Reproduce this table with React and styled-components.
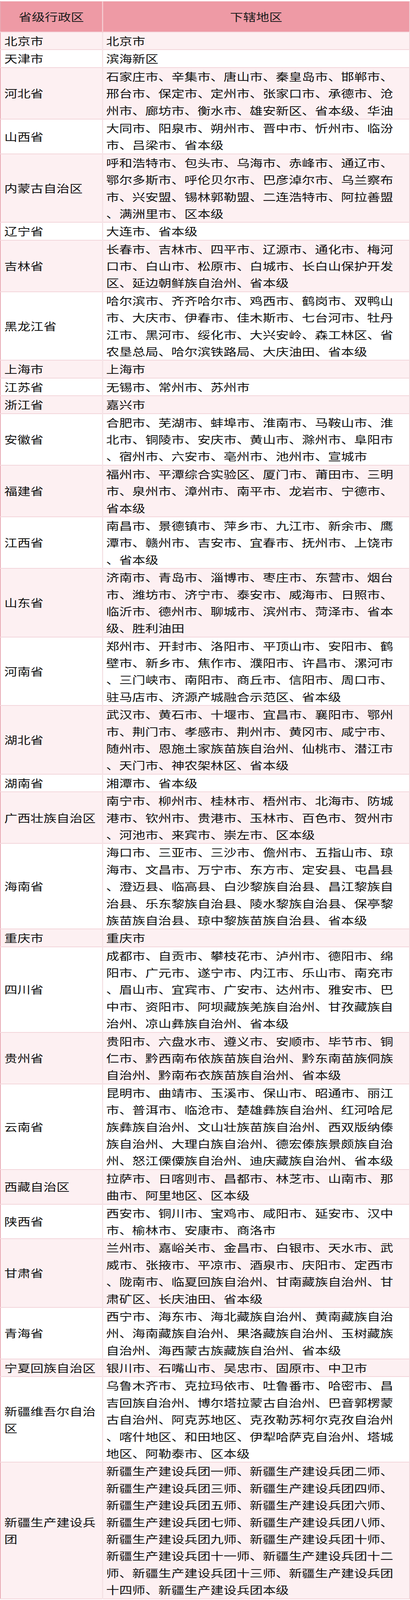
import styled, { createGlobalStyle } from 'styled-components';

const GlobalStyle = createGlobalStyle`
  body {
    margin: 0;
    background: #ffffff;
  }
`;

const rows = [
  ['北京市', '北京市'],
  ['天津市', '滨海新区'],
  ['河北省', '石家庄市、辛集市、唐山市、秦皇岛市、邯郸市、邢台市、保定市、定州市、张家口市、承德市、沧州市、廊坊市、衡水市、雄安新区、省本级、华油'],
  ['山西省', '大同市、阳泉市、朔州市、晋中市、忻州市、临汾市、吕梁市、省本级'],
  ['内蒙古自治区', '呼和浩特市、包头市、乌海市、赤峰市、通辽市、鄂尔多斯市、呼伦贝尔市、巴彦淖尔市、乌兰察布市、兴安盟、锡林郭勒盟、二连浩特市、阿拉善盟、满洲里市、区本级'],
  ['辽宁省', '大连市、省本级'],
  ['吉林省', '长春市、吉林市、四平市、辽源市、通化市、梅河口市、白山市、松原市、白城市、长白山保护开发区、延边朝鲜族自治州、省本级'],
  ['黑龙江省', '哈尔滨市、齐齐哈尔市、鸡西市、鹤岗市、双鸭山市、大庆市、伊春市、佳木斯市、七台河市、牡丹江市、黑河市、绥化市、大兴安岭、森工林区、省农垦总局、哈尔滨铁路局、大庆油田、省本级'],
  ['上海市', '上海市'],
  ['江苏省', '无锡市、常州市、苏州市'],
  ['浙江省', '嘉兴市'],
  ['安徽省', '合肥市、芜湖市、蚌埠市、淮南市、马鞍山市、淮北市、铜陵市、安庆市、黄山市、滁州市、阜阳市、宿州市、六安市、亳州市、池州市、宣城市'],
  ['福建省', '福州市、平潭综合实验区、厦门市、莆田市、三明市、泉州市、漳州市、南平市、龙岩市、宁德市、省本级'],
  ['江西省', '南昌市、景德镇市、萍乡市、九江市、新余市、鹰潭市、赣州市、吉安市、宜春市、抚州市、上饶市、省本级'],
  ['山东省', '济南市、青岛市、淄博市、枣庄市、东营市、烟台市、潍坊市、济宁市、泰安市、威海市、日照市、临沂市、德州市、聊城市、滨州市、菏泽市、省本级、胜利油田'],
  ['河南省', '郑州市、开封市、洛阳市、平顶山市、安阳市、鹤壁市、新乡市、焦作市、濮阳市、许昌市、漯河市、三门峡市、南阳市、商丘市、信阳市、周口市、驻马店市、济源产城融合示范区、省本级'],
  ['湖北省', '武汉市、黄石市、十堰市、宜昌市、襄阳市、鄂州市、荆门市、孝感市、荆州市、黄冈市、咸宁市、随州市、恩施土家族苗族自治州、仙桃市、潜江市、天门市、神农架林区、省本级'],
  ['湖南省', '湘潭市、省本级'],
  ['广西壮族自治区', '南宁市、柳州市、桂林市、梧州市、北海市、防城港市、钦州市、贵港市、玉林市、百色市、贺州市、河池市、来宾市、崇左市、区本级'],
  ['海南省', '海口市、三亚市、三沙市、儋州市、五指山市、琼海市、文昌市、万宁市、东方市、定安县、屯昌县、澄迈县、临高县、白沙黎族自治县、昌江黎族自治县、乐东黎族自治县、陵水黎族自治县、保亭黎族苗族自治县、琼中黎族苗族自治县、省本级'],
  ['重庆市', '重庆市'],
  ['四川省', '成都市、自贡市、攀枝花市、泸州市、德阳市、绵阳市、广元市、遂宁市、内江市、乐山市、南充市、眉山市、宜宾市、广安市、达州市、雅安市、巴中市、资阳市、阿坝藏族羌族自治州、甘孜藏族自治州、凉山彝族自治州、省本级'],
  ['贵州省', '贵阳市、六盘水市、遵义市、安顺市、毕节市、铜仁市、黔西南布依族苗族自治州、黔东南苗族侗族自治州、黔南布衣族苗族自治州、省本级'],
  ['云南省', '昆明市、曲靖市、玉溪市、保山市、昭通市、丽江市、普洱市、临沧市、楚雄彝族自治州、红河哈尼族彝族自治州、文山壮族苗族自治州、西双版纳傣族自治州、大理白族自治州、德宏傣族景颇族自治州、怒江傈僳族自治州、迪庆藏族自治州、省本级'],
  ['西藏自治区', '拉萨市、日喀则市、昌都市、林芝市、山南市、那曲市、阿里地区、区本级'],
  ['陕西省', '西安市、铜川市、宝鸡市、咸阳市、延安市、汉中市、榆林市、安康市、商洛市'],
  ['甘肃省', '兰州市、嘉峪关市、金昌市、白银市、天水市、武威市、张掖市、平凉市、酒泉市、庆阳市、定西市、陇南市、临夏回族自治州、甘南藏族自治州、甘肃矿区、长庆油田、省本级'],
  ['青海省', '西宁市、海东市、海北藏族自治州、黄南藏族自治州、海南藏族自治州、果洛藏族自治州、玉树藏族自治州、海西蒙古族藏族自治州、省本级'],
  ['宁夏回族自治区', '银川市、石嘴山市、吴忠市、固原市、中卫市'],
  ['新疆维吾尔自治区', '乌鲁木齐市、克拉玛依市、吐鲁番市、哈密市、昌吉回族自治州、博尔塔拉蒙古自治州、巴音郭楞蒙古自治州、阿克苏地区、克孜勒苏柯尔克孜自治州、喀什地区、和田地区、伊犁哈萨克自治州、塔城地区、阿勒泰市、区本级'],
  ['新疆生产建设兵团', '新疆生产建设兵团一师、新疆生产建设兵团二师、新疆生产建设兵团三师、新疆生产建设兵团四师、新疆生产建设兵团五师、新疆生产建设兵团六师、新疆生产建设兵团七师、新疆生产建设兵团八师、新疆生产建设兵团九师、新疆生产建设兵团十师、新疆生产建设兵团十一师、新疆生产建设兵团十二师、新疆生产建设兵团十三师、新疆生产建设兵团十四师、新疆生产建设兵团本级'],
];

// every glyph is full width, so the columns wrap on a fixed character count
function chunk(text, size) {
  const chars = Array.from(text);
  const lines = [];
  for (let i = 0; i < chars.length; i += size) {
    lines.push(chars.slice(i, i + size).join(''));
  }
  return lines;
}

export default function App() {
  return (
    <Page>
      <GlobalStyle />
      <Table>
        <colgroup>
          <Col $w="261px" />
          <Col />
        </colgroup>
        <thead>
          <tr>
            <HeadCell><Label>省级行政区</Label></HeadCell>
            <HeadCell><Label>下辖地区</Label></HeadCell>
          </tr>
        </thead>
        <tbody>
          {rows.map(([name, areas], i) => (
            <Row key={name} $shade={i % 2 === 0}>
              <NameCell>
                {chunk(name, 7).map((line, j) => (
                  <Line key={j}>{line}</Line>
                ))}
              </NameCell>
              <AreaCell>
                {chunk(areas, 22).map((line, j) => (
                  <Line key={j}>{line}</Line>
                ))}
              </AreaCell>
            </Row>
          ))}
        </tbody>
      </Table>
    </Page>
  );
}

const Page = styled.div`
  width: 1049px;
  padding-top: 3px;
  font-family: "Noto Sans CJK SC", sans-serif;
  color: #111111;
`;

const Table = styled.table`
  width: 100%;
  border-collapse: collapse;
  table-layout: fixed;
  font-size: 33.4px;
  line-height: 43.4px;
  border-left: 2px solid #e8aab4;
  border-right: 2px solid #efd0d5;
  border-bottom: 2px solid #efc9cf;
`;

const Col = styled.col`
  width: ${p => p.$w || 'auto'};
`;

const HeadCell = styled.th`
  height: 77px;
  padding: 0;
  background: #ee9aa5;
  color: #1c1c1c;
  font-weight: 400;
  text-align: center;
  vertical-align: middle;
  border-top: 1px solid #f3c3ca;
  border-bottom: 2px solid #f4d6db;
  & + & {
    border-left: 3px solid #f4c9cf;
  }
`;

const Label = styled.span`
  display: inline-block;
  transform: scaleY(0.82);
`;

const Row = styled.tr`
  background: ${p => (p.$shade ? '#fdf0f2' : '#ffffff')};
`;

const NameCell = styled.td`
  padding: 0 6px 0 9px;
  vertical-align: middle;
  border-bottom: 2px solid #f3d6db;
  border-right: 3px solid #f5e3e6;
`;

const AreaCell = styled.td`
  padding: 0 0 0 8px;
  vertical-align: middle;
  border-bottom: 2px solid #f3d6db;
`;

const Line = styled.div`
  height: 43.4px;
  line-height: 43.4px;
  white-space: nowrap;
  transform: scaleY(0.82);
`;
